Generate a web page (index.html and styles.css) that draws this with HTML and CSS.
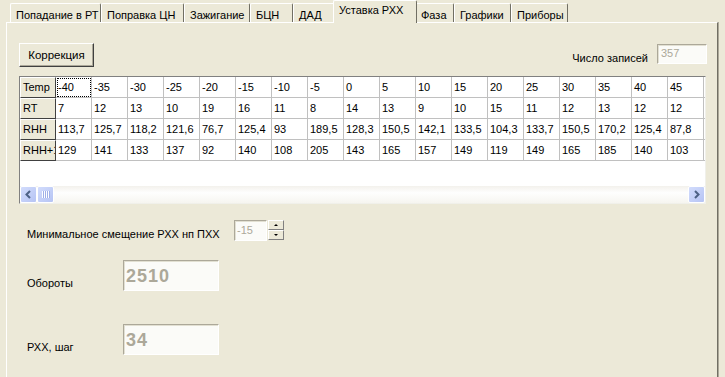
FILE: index.html
```html
<!DOCTYPE html>
<html lang="ru">
<head>
    <meta charset="UTF-8">
    <title>Уставка РХХ</title>
    <link rel="stylesheet" href="styles.css">
</head>
<body>
    <div class="tabs">
        <div class="tab t1">Попадание в РТ</div>
        <div class="tab t2">Поправка ЦН</div>
        <div class="tab t3">Зажигание</div>
        <div class="tab t4">БЦН</div>
        <div class="tab t5">ДАД</div>
        <div class="tab active">Уставка РХХ</div>
        <div class="tab t7">Фаза</div>
        <div class="tab t8">Графики</div>
        <div class="tab t9">Приборы</div>
    </div>

    <div class="panel">
        <div class="toolbar">
            <button class="btn">Коррекция</button>
            <div class="counter">
                <span>Число записей</span>
                <div class="field count">357</div>
            </div>
        </div>

        <div class="grid">
            <div class="grid-body">
                <table class="data">
                    <tr>
                        <th>Temp</th>
                        <td class="focus">-40</td><td>-35</td><td>-30</td><td>-25</td><td>-20</td><td>-15</td>
                        <td>-10</td><td>-5</td><td>0</td><td>5</td><td>10</td><td>15</td>
                        <td>20</td><td>25</td><td>30</td><td>35</td><td>40</td><td>45</td><td></td>
                    </tr>
                    <tr>
                        <th>RT</th>
                        <td>7</td><td>12</td><td>13</td><td>10</td><td>19</td><td>16</td>
                        <td>11</td><td>8</td><td>14</td><td>13</td><td>9</td><td>10</td>
                        <td>15</td><td>11</td><td>12</td><td>13</td><td>12</td><td>12</td><td></td>
                    </tr>
                    <tr>
                        <th>RHH</th>
                        <td>113,7</td><td>125,7</td><td>118,2</td><td>121,6</td><td>76,7</td><td>125,4</td>
                        <td>93</td><td>189,5</td><td>128,3</td><td>150,5</td><td>142,1</td><td>133,5</td>
                        <td>104,3</td><td>133,7</td><td>150,5</td><td>170,2</td><td>125,4</td><td>87,8</td><td></td>
                    </tr>
                    <tr>
                        <th>RHH+15</th>
                        <td>129</td><td>141</td><td>133</td><td>137</td><td>92</td><td>140</td>
                        <td>108</td><td>205</td><td>143</td><td>165</td><td>157</td><td>149</td>
                        <td>119</td><td>149</td><td>165</td><td>185</td><td>140</td><td>103</td><td></td>
                    </tr>
                </table>
            </div>
            <div class="hscroll">
                <div class="sb-btn">
                    <svg width="9" height="9" viewBox="0 0 9 9"><path d="M6 1 L2.5 4.5 L6 8" fill="none" stroke="#4d6185" stroke-width="2"/></svg>
                </div>
                <div class="sb-thumb"><span></span><span></span><span></span><span></span></div>
                <div class="sb-track"></div>
                <div class="sb-btn">
                    <svg width="9" height="9" viewBox="0 0 9 9"><path d="M3 1 L6.5 4.5 L3 8" fill="none" stroke="#4d6185" stroke-width="2"/></svg>
                </div>
            </div>
        </div>

        <div class="params">
            <div class="row spin-row">
                <span class="label">Минимальное смещение РХХ нп ПХХ</span>
                <div class="spin">
                    <div class="field spin-field">-15</div>
                    <div class="spin-btns">
                        <div class="spin-btn"><i class="up"></i></div>
                        <div class="spin-btn"><i class="down"></i></div>
                    </div>
                </div>
            </div>
            <div class="row">
                <span class="label short">Обороты</span>
                <div class="field big">2510</div>
            </div>
            <div class="row">
                <span class="label short">РХХ, шаг</span>
                <div class="field big">34</div>
            </div>
        </div>
    </div>
</body>
</html>
```

FILE: styles.css
```css
body {
    margin: 0;
    background-color: #ece9d8;
    font-family: "Liberation Sans", Arial, sans-serif;
    font-size: 11px;
    color: #000;
    overflow: hidden;
}

/* tab strip */
.tabs {
    display: flex;
    align-items: flex-end;
    height: 22px;
    padding-left: 10px;
}

.tab {
    position: relative;
    box-sizing: border-box;
    height: 19px;
    padding: 5px 0 0 5px;
    border-top: 1px solid #fff;
    border-left: 1px solid #fff;
    border-right: 1px solid #716f64;
    border-radius: 2px 2px 0 0;
    line-height: 12px;
    white-space: nowrap;
}

.t1 { width: 91px; }
.t2 { width: 83px; }
.t3 { width: 66px; }
.t4 { width: 43px; }
.t5 { width: 42px; }
.t7 { width: 39px; }
.t8 { width: 57px; }
.t9 { width: 57px; }

.tab.active {
    z-index: 1;
    width: 84px;
    height: 23px;
    margin: 0 -2px -1px -2px;
    padding-top: 3px;
    background-color: #ece9d8;
}

/* page panel */
.panel {
    box-sizing: border-box;
    width: 712px;
    height: 360px;
    margin-left: 6px;
    padding: 20px 10px 0 12px;
    border-top: 1px solid #fff;
    border-left: 1px solid #fff;
    border-right: 1px solid #716f64;
    box-shadow: 1px 0 0 #aca899;
}

.toolbar {
    display: flex;
    justify-content: space-between;
    align-items: flex-start;
    height: 32px;
}

.btn {
    box-sizing: border-box;
    width: 75px;
    height: 24px;
    padding: 0;
    background-color: #ece9d8;
    border: 1px solid;
    border-color: #fff #404040 #404040 #fff;
    box-shadow: inset -1px -1px 0 #aca899;
    font-family: inherit;
    font-size: 11.5px;
    color: #000;
}

.counter {
    display: flex;
    align-items: center;
    gap: 9px;
    margin-top: 1px;
}

.counter span {
    padding-top: 8px;
}

.field {
    box-sizing: border-box;
    background-color: #fbfbf8;
    border: 1px solid;
    border-color: #aca899 #fff #fff #aca899;
    box-shadow: inset 1px 1px 0 #e2e0d2;
    color: #aca899;
}

.count {
    width: 50px;
    height: 20px;
    padding: 2px 0 0 3px;
}

/* grid */
.grid {
    box-sizing: border-box;
    width: 687px;
    height: 128px;
    margin-top: 1px;
    background-color: #fff;
    border-top: 1px solid #808080;
    border-left: 1px solid #808080;
    border-right: 1px solid #f0f0ea;
    border-bottom: 1px solid #f0f0ea;
    display: flex;
    flex-direction: column;
    overflow: hidden;
}

.grid-body {
    flex: 1;
    overflow: hidden;
}

.data {
    width: 720px;
    border-collapse: separate;
    border-spacing: 0;
    table-layout: fixed;
}

.data th,
.data td {
    box-sizing: border-box;
    width: 36px;
    height: 21px;
    padding: 0 0 1px 2px;
    font-weight: normal;
    text-align: left;
    white-space: nowrap;
    overflow: hidden;
}

.data td {
    border-right: 1px solid #c0c0c0;
    border-bottom: 1px solid #c0c0c0;
}

.data th {
    background-color: #ece9d8;
    border-top: 1px solid #fff;
    border-left: 1px solid #fff;
    border-right: 1px solid #404040;
    border-bottom: 1px solid #404040;
    padding-left: 2px;
    text-overflow: clip;
}

.data td.focus {
    outline: 1px dotted #000;
    outline-offset: -2px;
}

/* horizontal scrollbar */
.hscroll {
    display: flex;
    height: 17px;
    background: linear-gradient(#f3f1ec, #fefefe 40%, #f6f5f0);
}

.sb-btn,
.sb-thumb {
    box-sizing: border-box;
    width: 17px;
    height: 17px;
    border: 1px solid #fff;
    border-radius: 2px;
    background: linear-gradient(135deg, #d2dcfc, #b6c4f4);
    display: flex;
    align-items: center;
    justify-content: center;
}

.sb-thumb {
    gap: 1px;
}

.sb-thumb span {
    width: 1px;
    height: 7px;
    background-color: #fff;
    box-shadow: 1px 0 0 #9fb0e8;
}

.sb-track {
    flex: 1;
}

/* parameters below the grid */
.params {
    display: flex;
    flex-direction: column;
    padding: 16px 0 0 8px;
}

.row {
    display: flex;
    align-items: flex-end;
}

.row + .row {
    margin-top: 19px;
}

.row + .row + .row {
    margin-top: 33px;
}

.label {
    padding-bottom: 2px;
}

.spin-row .label {
    width: 207px;
    padding-bottom: 1px;
}

.label.short {
    width: 96px;
}

.spin {
    display: flex;
}

.spin-field {
    width: 33px;
    height: 21px;
    padding: 3px 0 0 2px;
}

.spin-btns {
    display: flex;
    flex-direction: column;
    margin-left: 1px;
}

.spin-btn {
    box-sizing: border-box;
    width: 16px;
    height: 10px;
    background-color: #ece9d8;
    border: 1px solid;
    border-color: #fff #808080 #808080 #fff;
    display: flex;
    align-items: center;
    justify-content: center;
}

.spin-btn i {
    width: 0;
    height: 0;
    border-left: 2px solid transparent;
    border-right: 2px solid transparent;
}

.spin-btn .up {
    border-bottom: 2px solid #000;
}

.spin-btn .down {
    border-top: 2px solid #000;
}

.field.big {
    width: 96px;
    height: 31px;
    padding: 5px 0 0 2px;
    font-size: 18px;
    font-weight: bold;
    letter-spacing: 1px;
}
```
